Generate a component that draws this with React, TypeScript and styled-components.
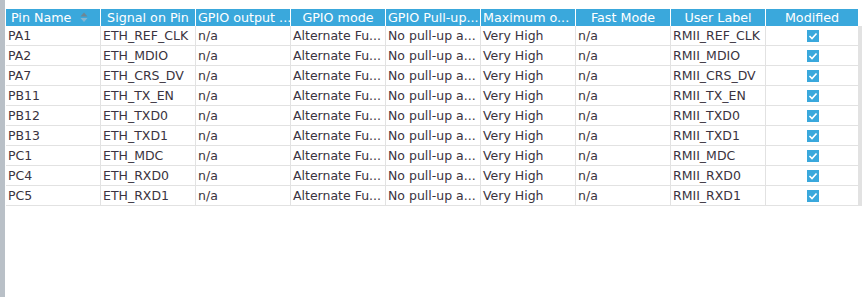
import React from "react";
import styled, { createGlobalStyle } from "styled-components";

const Global = createGlobalStyle`
  html, body { margin: 0; padding: 0; background: #fff; }
  body { font-family: "DejaVu Sans", Verdana, sans-serif; }
`;

const Page = styled.div`
  display: flex;
  width: 862px;
  height: 297px;
  overflow: hidden;
  background: #fff;
`;

const Strip = styled.div`
  width: 5px;
  flex: none;
  background: #b9c0c7;
`;

const Content = styled.div`
  flex: 1;
  padding: 9px 0 0 1px;
  display: flex;
  flex-direction: column;
`;

const cols = "94px 94px 94px 94px 94px 94px 94px 94px 92px";

const HeaderRow = styled.div`
  display: grid;
  grid-template-columns: ${cols};
  column-gap: 1px;
  height: 17px;
`;

const HeadCell = styled.div<{ $left?: boolean; $pad?: number }>`
  background: #3aa8dc;
  color: #fff;
  font-size: 12.7px;
  line-height: 17px;
  padding: 0 2px 0 ${(p) => p.$pad ?? 2}px;
  white-space: nowrap;
  overflow: hidden;
  display: flex;
  align-items: center;
  justify-content: ${(p) => (p.$left ? "flex-start" : "center")};
  gap: 9px;
`;

const Row = styled.div`
  display: grid;
  grid-template-columns: ${cols};
  column-gap: 1px;
  height: 19px;
  border-bottom: 1px solid #e2e2e2;
  background: #e2e2e2;
`;

const Cell = styled.div<{ $center?: boolean }>`
  background: #fff;
  color: #3a3340;
  font-size: 12.5px;
  line-height: 19px;
  padding: 0 2px;
  white-space: nowrap;
  overflow: hidden;
  display: flex;
  align-items: center;
  justify-content: ${(p) => (p.$center ? "center" : "flex-start")};
`;

const Box = styled.span`
  width: 12px;
  height: 12px;
  background: #3aa8dc;
  display: inline-flex;
  align-items: center;
  justify-content: center;
  margin-left: 2px;
`;

const SortIcon = () => (
  <svg width="8" height="11" viewBox="0 0 8 11">
    <polygon points="4,0.5 7.5,4.5 0.5,4.5" fill="#6f8693" />
    <polygon points="0.5,6 7.5,6 4,10" fill="#86b6d2" />
  </svg>
);

const Check = () => (
  <Box>
    <svg width="10" height="10" viewBox="0 0 10 10">
      <polyline points="1.5,5 4,7.5 8.5,2.5" fill="none" stroke="#fff" strokeWidth="1.6" />
    </svg>
  </Box>
);

const headers: { t: string; left?: boolean; pad?: number }[] = [
  { t: "Pin Name", left: true, pad: 5 },
  { t: "Signal on Pin" },
  { t: "GPIO output ...", left: true },
  { t: "GPIO mode" },
  { t: "GPIO Pull-up...", left: true },
  { t: "Maximum o...", left: true },
  { t: "Fast Mode" },
  { t: "User Label" },
  { t: "Modified" },
];

const rows = [
  ["PA1", "ETH_REF_CLK", "RMII_REF_CLK"],
  ["PA2", "ETH_MDIO", "RMII_MDIO"],
  ["PA7", "ETH_CRS_DV", "RMII_CRS_DV"],
  ["PB11", "ETH_TX_EN", "RMII_TX_EN"],
  ["PB12", "ETH_TXD0", "RMII_TXD0"],
  ["PB13", "ETH_TXD1", "RMII_TXD1"],
  ["PC1", "ETH_MDC", "RMII_MDC"],
  ["PC4", "ETH_RXD0", "RMII_RXD0"],
  ["PC5", "ETH_RXD1", "RMII_RXD1"],
];

export default function App() {
  return (
    <>
      <Global />
      <Page>
        <Strip />
        <Content>
          <HeaderRow>
            {headers.map((h, i) => (
              <HeadCell key={h.t} $left={h.left} $pad={h.pad}>
                <span>{h.t}</span>
                {i === 0 && <SortIcon />}
              </HeadCell>
            ))}
          </HeaderRow>
          {rows.map(([pin, sig, label]) => (
            <Row key={pin}>
              <Cell>{pin}</Cell>
              <Cell>{sig}</Cell>
              <Cell>n/a</Cell>
              <Cell>Alternate Fu...</Cell>
              <Cell>No pull-up a...</Cell>
              <Cell>Very High</Cell>
              <Cell>n/a</Cell>
              <Cell>{label}</Cell>
              <Cell $center><Check /></Cell>
            </Row>
          ))}
        </Content>
      </Page>
    </>
  );
}
